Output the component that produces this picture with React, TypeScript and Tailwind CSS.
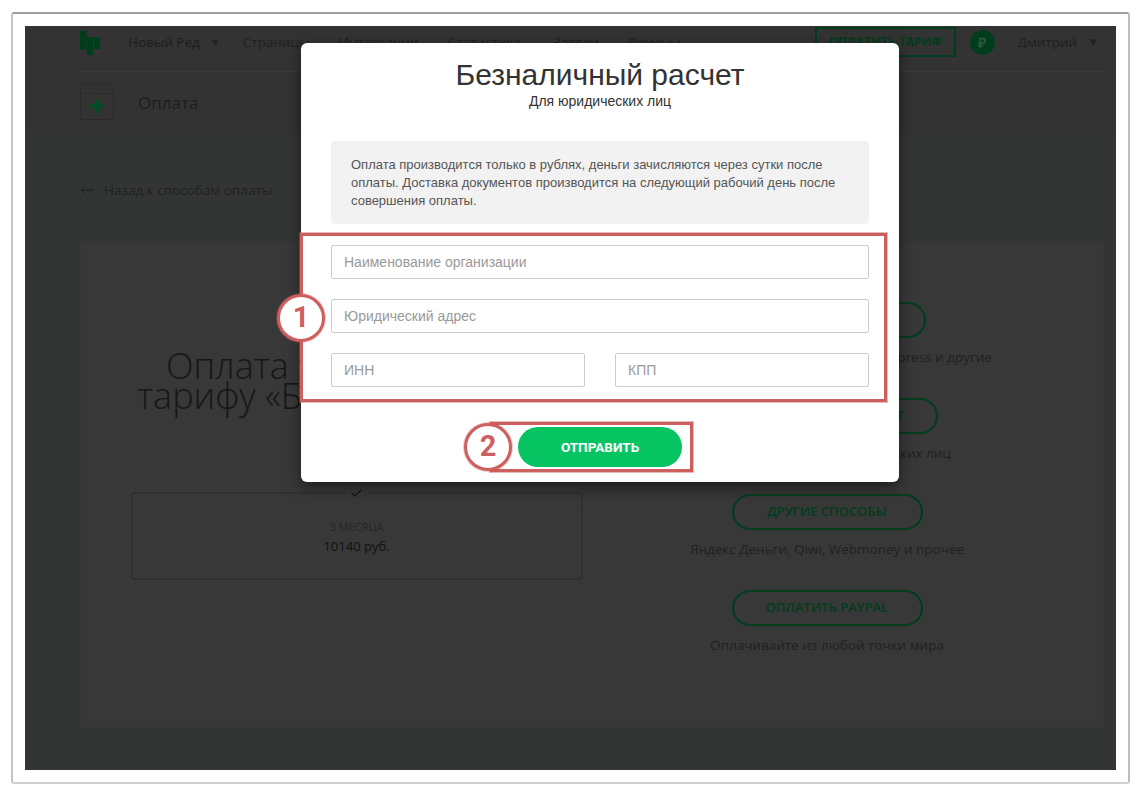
import { Check } from "lucide-react";

const NAV_ITEMS = [
  { label: "Страницы", className: "ml-[22px] w-[96px]" },
  { label: "Интеграции", className: "w-[109px]" },
  { label: "Статистика", className: "w-[105px]" },
  { label: "Заявки", className: "w-[74px]" },
  { label: "Домены", className: "w-[100px]" },
];

const PAY_METHODS = [
  {
    button: "ОПЛАТИТЬ КАРТОЙ",
    width: "w-[198px]",
    text: "Карты Visa, MasterCard, American Express и другие",
  },
  {
    button: "БЕЗНАЛИЧНЫЙ РАСЧЕТ",
    width: "w-[222px]",
    text: "Счет и договор для юридических лиц",
  },
  {
    button: "ДРУГИЕ СПОСОБЫ",
    width: "w-[191px]",
    text: "Яндекс Деньги, Qiwi, Webmoney и прочее",
  },
  {
    button: "ОПЛАТИТЬ PAYPAL",
    width: "w-[191px]",
    text: "Оплачивайте из любой точки мира",
  },
];

const PageBehind = () => (
  <div className="h-full bg-[#333534] font-['Open_Sans',sans-serif] text-[#1c1d1d]">
    <div className="bg-[#333333] pr-[11px] pl-[55px]">
      <div className="h-[46px] border-b border-[#3a3a3a]">
        <div className="flex h-[32px] items-center">
          <svg width="20" height="24" viewBox="0 0 20 24" className="mt-[2px]">
            <rect x="0" y="0" width="6.5" height="19" fill="#003d1d" />
            <rect x="7" y="6" width="6" height="18" fill="#003d1d" />
            <rect x="14" y="6" width="6" height="12" fill="#003d1d" />
          </svg>
          <span className="ml-[28px] text-[13.5px]">Новый Ред</span>
          <span className="ml-[10px] text-[11px] text-[#222]">▼</span>
          <nav className="flex text-[13.5px] text-[#202121]">
            {NAV_ITEMS.map(({ label, className }) => (
              <span key={label} className={className}>
                {label}
              </span>
            ))}
          </nav>
          <button className="ml-[88px] h-[30px] w-[141px] border-2 border-[#003d1d] text-[12px] font-bold text-[#003d1d]">
            ОПЛАТИТЬ ТАРИФ
          </button>
          <span className="ml-[14px] flex h-[25px] w-[25px] items-center justify-center rounded-full bg-[#003d1d] text-[14px] font-bold text-[#2d5a3c]">
            ₽
          </span>
          <span className="ml-[23px] text-[13.5px] text-[#202121]">Дмитрий</span>
          <span className="ml-[10px] text-[12px] text-[#222]">▼</span>
        </div>
      </div>
      <div className="flex h-[63px] items-start pt-[12px]">
        <svg width="34" height="36" viewBox="0 0 34 36">
          <rect x="0.5" y="0.5" width="33" height="35" rx="2" fill="none" stroke="#2b2b2b" />
          <line x1="0" y1="9.5" x2="34" y2="9.5" stroke="#2b2b2b" />
          <circle cx="5" cy="5" r="1" fill="#2b2b2b" />
          <circle cx="9" cy="5" r="1" fill="#2b2b2b" />
          <circle cx="13" cy="5" r="1" fill="#2b2b2b" />
          <path d="M10 22h14M17 15v14" stroke="#004d24" strokeWidth="3.5" />
        </svg>
        <span className="mt-[7px] ml-[24px] text-[17px] leading-[24px]">Оплата</span>
      </div>
    </div>
    <div className="px-[55px] pt-[45px]">
      <div className="flex h-[20px] items-center text-[13.5px] text-[#202121]">
        <svg width="14" height="8" viewBox="0 0 14 8">
          <path d="M14 4H1M4.5 .8 1 4l3.5 3.2" fill="none" stroke="#1c1d1d" />
        </svg>
        <span className="ml-[10px]">Назад к способам оплаты</span>
      </div>
      <div className="mt-[42px] flex h-[486px] w-[1024px] rounded-[4px] border border-[#363636] bg-[#383838]">
        <div className="flex w-[551px] flex-col items-center">
          <h1 className="mt-[108px] w-[500px] pr-[18px] text-center text-[36px] leading-[30px] font-light text-[#161717]">
            Оплата услуг сервиса
            <br />
            тарифу «Базовый» на год
          </h1>
          <div className="relative mt-[81px] flex h-[88px] w-[452px] flex-col items-center rounded-[4px] border-2 border-[#303030] pt-[25px]">
            <span className="absolute -top-[13px] flex h-[24px] w-[24px] items-center justify-center bg-[#383838]">
              <Check size={13} strokeWidth={2} className="text-[#111]" />
            </span>
            <span className="text-[11px] leading-[16px] text-[#262727]">3 МЕСЯЦА</span>
            <span className="mt-[1px] text-[13px] leading-[20px] text-[#111]">10140 руб.</span>
          </div>
        </div>
        <div className="flex w-[390px] flex-col items-center pt-[59px]">
          {PAY_METHODS.map(({ button, width, text }) => (
            <div key={button} className="mb-[25px] flex h-[71px] flex-col items-center">
              <button
                className={`${width} h-[36px] rounded-full border-2 border-[#003d1d] text-[13px] font-semibold text-[#003d1d]`}
              >
                {button}
              </button>
              <span className="mt-[9px] whitespace-nowrap text-[13.5px] leading-[20px] text-[#202121]">
                {text}
              </span>
            </div>
          ))}
        </div>
      </div>
    </div>
  </div>
);

const Field = ({ placeholder }: { placeholder: string }) => (
  <input
    placeholder={placeholder}
    className="h-[34px] w-full rounded-[2px] border border-[#cccccc] bg-white px-[12px] text-[14px] placeholder:text-[#999999]"
  />
);

const Modal = () => (
  <div className="absolute top-[17px] left-[276px] h-[439px] w-[598px] rounded-[6px] bg-white px-[30px] font-['Liberation_Sans',sans-serif] shadow-[0_5px_15px_rgba(0,0,0,0.5)]">
    <h2 className="pt-[14px] text-center text-[30px] leading-[36px] text-[#333333]">
      Безналичный расчет
    </h2>
    <p className="text-center text-[14px] leading-[16px] text-[#333333]">Для юридических лиц</p>
    <div className="mt-[32px] h-[83px] rounded-[4px] bg-[#f2f2f2] px-[20px] py-[15px] text-[13px] leading-[18px] text-[#555555]">
      Оплата производится только в рублях, деньги зачисляются через сутки после оплаты. Доставка
      документов производится на следующий рабочий день после совершения оплаты.
    </div>
    <div className="mt-[21px] flex flex-col gap-[20px]">
      <Field placeholder="Наименование организации" />
      <Field placeholder="Юридический адрес" />
      <div className="flex gap-[30px]">
        <Field placeholder="ИНН" />
        <Field placeholder="КПП" />
      </div>
    </div>
    <div className="mt-[40px] flex justify-center">
      <button className="h-[40px] w-[164px] rounded-full bg-[#07c463] font-['Roboto',sans-serif] text-[13.5px] font-bold text-white">
        ОТПРАВИТЬ
      </button>
    </div>
  </div>
);

// numbered red marks drawn on top of the shot
const Marks = () => (
  <>
    <div className="absolute top-[207px] left-[275px] h-[169px] w-[587px] border-[3px] border-[#cd5f5f] shadow-[0_0_0_1px_rgba(205,95,95,0.45)]" />
    <div className="absolute top-[396px] left-[465px] h-[50px] w-[203px] border-[3px] border-[#cd5f5f] shadow-[0_0_0_1px_rgba(205,95,95,0.45)]" />
    <div className="absolute top-[268px] left-[252px] flex h-[48px] w-[48px] items-center justify-center rounded-full border-[3px] border-[#cd5f5f] bg-white font-['Roboto',sans-serif] text-[29px] font-bold text-[#cd5f5f] shadow-[0_0_0_1px_rgba(205,95,95,0.35)]">
      1
    </div>
    <div className="absolute top-[397px] left-[439px] flex h-[48px] w-[48px] items-center justify-center rounded-full border-[3px] border-[#cd5f5f] bg-white font-['Roboto',sans-serif] text-[29px] font-bold text-[#cd5f5f] shadow-[0_0_0_1px_rgba(205,95,95,0.35)]">
      2
    </div>
  </>
);

export default function App() {
  return (
    <div className="h-[792px] w-[1139px] bg-white pt-[12px] pr-[9px] pb-[8px] pl-[11px]">
      <div className="h-[772px] rounded-[3px] border-2 border-t-[#a0a0a0] border-r-[#bdbdbd] border-b-[#d0d0d0] border-l-[#c4c4c4] px-[12px] pt-[12px]">
        <div className="relative h-[744px] w-[1091px] overflow-hidden">
          <PageBehind />
          <Modal />
          <Marks />
        </div>
      </div>
    </div>
  );
}
